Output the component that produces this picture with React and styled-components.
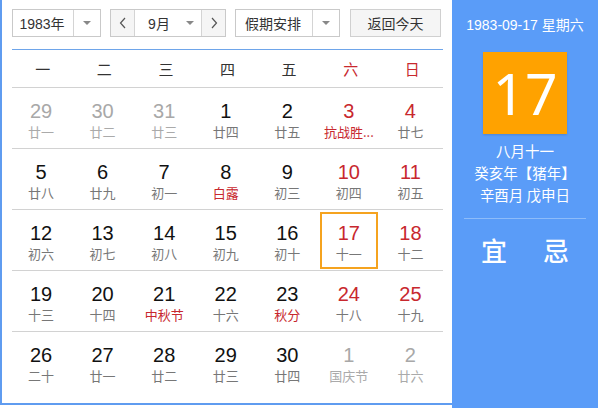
import styled, { createGlobalStyle } from 'styled-components';

const GlobalStyle = createGlobalStyle`
  body {
    margin: 0;
    overflow: hidden;
    background: #fff;
    font-family: "Liberation Sans", "Noto Sans CJK SC", sans-serif;
  }
`;

const WEEKDAYS = ['一', '二', '三', '四', '五', '六', '日'];

// [day, lunar, muted, festival]
const WEEKS = [
  [[29, '廿一', true], [30, '廿二', true], [31, '廿三', true], [1, '廿四'], [2, '廿五'], [3, '抗战胜...', false, true], [4, '廿七']],
  [[5, '廿八'], [6, '廿九'], [7, '初一'], [8, '白露', false, true], [9, '初三'], [10, '初四'], [11, '初五']],
  [[12, '初六'], [13, '初七'], [14, '初八'], [15, '初九'], [16, '初十'], [17, '十一'], [18, '十二']],
  [[19, '十三'], [20, '十四'], [21, '中秋节', false, true], [22, '十六'], [23, '秋分', false, true], [24, '十八'], [25, '十九']],
  [[26, '二十'], [27, '廿一'], [28, '廿二'], [29, '廿三'], [30, '廿四'], [1, '国庆节', true], [2, '廿六', true]],
];

const Chevron = ({ right }) => (
  <svg width="8" height="12" viewBox="0 0 8 12">
    <polyline
      points={right ? '2,1 6.5,6 2,11' : '6,1 1.5,6 6,11'}
      fill="none"
      stroke="#555"
      strokeWidth="1.2"
    />
  </svg>
);

const App = () => {
  return (
    <>
      <GlobalStyle />
      <Frame>
        <Main>
          <Toolbar>
            <Select $width={89}>
              <SelectText>1983年</SelectText>
              <Caret />
            </Select>
            <MonthGroup>
              <ArrowBtn>
                <Chevron />
              </ArrowBtn>
              <MonthSelect>
                <SelectText>9月</SelectText>
                <CaretInline />
              </MonthSelect>
              <ArrowBtn $right>
                <Chevron right />
              </ArrowBtn>
            </MonthGroup>
            <Select $width={105}>
              <SelectText>假期安排</SelectText>
              <Caret />
            </Select>
            <TodayBtn>返回今天</TodayBtn>
          </Toolbar>

          <Calendar>
            <WeekHeader>
              {WEEKDAYS.map((w, i) => (
                <WeekName key={w} $weekend={i > 4}>
                  {w}
                </WeekName>
              ))}
            </WeekHeader>
            {WEEKS.map((week, r) => (
              <WeekRow key={r} $last={r === WEEKS.length - 1}>
                {week.map(([day, lunar, muted, fest], c) => (
                  <DayCell key={c}>
                    <DayBox $selected={r === 2 && c === 5}>
                      <DayNum $muted={muted} $weekend={c > 4}>
                        {day}
                      </DayNum>
                      <Lunar $muted={muted} $fest={fest}>
                        {lunar}
                      </Lunar>
                    </DayBox>
                  </DayCell>
                ))}
              </WeekRow>
            ))}
          </Calendar>
        </Main>

        <Side>
          <SideDate>1983-09-17 星期六</SideDate>
          <BigDay>17</BigDay>
          <SideInfo>
            <div>八月十一</div>
            <div>癸亥年【猪年】</div>
            <div>辛酉月 戊申日</div>
          </SideInfo>
          <Divider />
          <YiJi>
            <span>宜</span>
            <span>忌</span>
          </YiJi>
        </Side>
      </Frame>
    </>
  );
};

const Frame = styled.div`
  display: flex;
  width: 600px;
  height: 408px;
`;

const Main = styled.div`
  width: 452px;
  height: 405px;
  box-sizing: border-box;
  border-left: 2px solid #5f9cf0;
  border-bottom: 2px solid #5f9cf0;
  padding: 9px 11px 0 10px;
`;

const Toolbar = styled.div`
  display: flex;
  align-items: center;
  height: 28px;
  gap: 9px;
`;

const Select = styled.div`
  display: flex;
  align-items: center;
  width: ${(p) => p.$width}px;
  height: 28px;
  box-sizing: border-box;
  border: 1px solid #c9c9c9;
  background: #fff;
  font-size: 14px;
  color: #333;
`;

const SelectText = styled.span`
  flex: 1;
  text-align: center;
  padding-right: 2px;
  font-family: "Liberation Sans", "Noto Sans CJK SC", sans-serif;
`;

const Caret = styled.span`
  width: 26px;
  height: 100%;
  border-left: 1px solid #d4d4d4;
  display: flex;
  align-items: center;
  justify-content: center;
  &::after {
    content: '';
    border-left: 4px solid transparent;
    border-right: 4px solid transparent;
    border-top: 4px solid #888;
  }
`;

const CaretInline = styled.span`
  width: 22px;
  display: flex;
  justify-content: center;
  &::after {
    content: '';
    border-left: 4px solid transparent;
    border-right: 4px solid transparent;
    border-top: 4px solid #888;
  }
`;

const MonthGroup = styled.div`
  display: flex;
  height: 28px;
  width: 116px;
  box-sizing: border-box;
  border: 1px solid #c9c9c9;
`;

const ArrowBtn = styled.div`
  width: 24px;
  display: flex;
  align-items: center;
  justify-content: center;
  background: #f5f5f5;
  box-sizing: border-box;
  border-left: ${(p) => (p.$right ? '1px solid #d4d4d4' : 'none')};
  border-right: ${(p) => (p.$right ? 'none' : '1px solid #d4d4d4')};
`;

const MonthSelect = styled.div`
  flex: 1;
  display: flex;
  align-items: center;
  font-size: 14px;
  color: #333;
  padding-left: 6px;
`;

const TodayBtn = styled.div`
  margin-left: 1px;
  width: 91px;
  height: 28px;
  box-sizing: border-box;
  border: 1px solid #d0d0d0;
  background: #f5f5f5;
  display: flex;
  align-items: center;
  justify-content: center;
  font-size: 14px;
  color: #333;
  font-family: "Noto Sans CJK SC", sans-serif;
`;

const Calendar = styled.div`
  margin-top: 12px;
  width: 431px;
  border-top: 1px solid #6ea5ea;
`;

const WeekHeader = styled.div`
  display: grid;
  grid-template-columns: repeat(7, 1fr);
  height: 37px;
  align-items: center;
  border-bottom: 1px solid #d2d2d2;
`;

const WeekName = styled.div`
  text-align: center;
  font-size: 15px;
  color: ${(p) => (p.$weekend ? '#c8282e' : '#333')};
  font-family: "Noto Sans CJK SC", sans-serif;
`;

const WeekRow = styled.div`
  display: grid;
  grid-template-columns: repeat(7, 1fr);
  height: 61px;
  box-sizing: border-box;
  border-bottom: ${(p) => (p.$last ? 'none' : '1px solid #d2d2d2')};
`;

const DayCell = styled.div`
  display: flex;
  align-items: center;
  justify-content: flex-start;
`;

const DayBox = styled.div`
  width: 58px;
  height: 57px;
  box-sizing: border-box;
  border: 2px solid ${(p) => (p.$selected ? '#f5a31f' : 'transparent')};
  display: flex;
  flex-direction: column;
  align-items: center;
  padding-top: 7px;
`;

const DayNum = styled.div`
  font-size: 20px;
  line-height: 24px;
  color: ${(p) => (p.$muted ? '#a8a8a8' : p.$weekend ? '#c8282e' : '#111')};
`;

const Lunar = styled.div`
  font-size: 13px;
  line-height: 18px;
  white-space: nowrap;
  font-family: "Noto Sans CJK SC", sans-serif;
  color: ${(p) => (p.$fest && !p.$muted ? '#c8282e' : p.$muted ? '#aaa' : '#777')};
`;

const Side = styled.div`
  width: 146px;
  background: #5a9cf8;
  display: flex;
  flex-direction: column;
  align-items: center;
  color: #fff;
  padding-top: 16px;
  box-sizing: border-box;
`;

const SideDate = styled.div`
  font-size: 14px;
  line-height: 18px;
  white-space: nowrap;
  font-family: "Liberation Sans", "Noto Sans CJK SC", sans-serif;
`;

const BigDay = styled.div`
  margin-top: 18px;
  width: 84px;
  height: 82px;
  background: #ffa200;
  display: flex;
  align-items: center;
  justify-content: center;
  font-size: 57px;
  font-family: "Noto Sans", "Liberation Sans", sans-serif;
  box-shadow: 0 1px 2px rgba(0, 0, 0, 0.15);
`;

const SideInfo = styled.div`
  margin-top: 6px;
  text-align: center;
  font-size: 14.5px;
  line-height: 22px;
  font-family: "Noto Sans CJK SC", sans-serif;
`;

const Divider = styled.div`
  margin-top: 12px;
  width: 122px;
  height: 1px;
  background: #8dbcfa;
`;

const YiJi = styled.div`
  display: flex;
  gap: 36px;
  margin-top: 12px;
  font-size: 26px;
  font-family: "Noto Sans CJK SC", sans-serif;
  font-weight: 500;
`;

export default App;
